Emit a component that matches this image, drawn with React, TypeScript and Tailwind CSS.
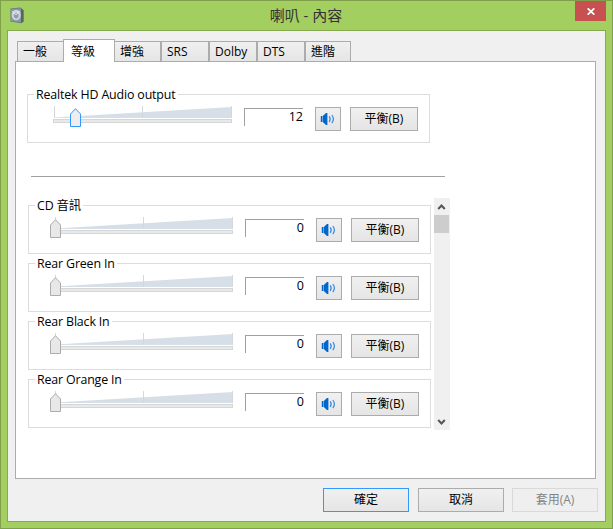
import { useState } from 'react';
import { clsx } from 'clsx';

const TABS = [
  { id: 'general', label: '一般', width: 'w-[47px]' },
  { id: 'levels', label: '等級', width: 'w-[52px]' },
  { id: 'enhance', label: '增強', width: 'w-[47px]' },
  { id: 'srs', label: 'SRS', width: 'w-[48px]' },
  { id: 'dolby', label: 'Dolby', width: 'w-[48px]' },
  { id: 'dts', label: 'DTS', width: 'w-[48px]' },
  { id: 'advanced', label: '進階', width: 'w-[46px]' },
];

const INPUTS = [
  { name: 'CD 音訊', value: 0 },
  { name: 'Rear Green In', value: 0 },
  { name: 'Rear Black In', value: 0 },
  { name: 'Rear Orange In', value: 0 },
];

const BUTTON_FACE = 'border border-[#acacac] bg-linear-to-b from-[#f0f0f0] to-[#e5e5e5]';

function DeviceIcon() {
  return (
    <svg width="15" height="17" viewBox="0 0 15 17">
      <path d="M0.5 1.5 L10.5 0.5 L13.5 3.5 L13.5 14.5 L11 16.2 L0.5 14.5Z" fill="#66737d" />
      <path d="M11 1 L13.5 3.5 L13.5 14.5 L11 16.2Z" fill="#5a665f" />
      <path d="M1 2 L11 1.2 L11 15.6 L1 14Z" fill="#8796a4" />
      <ellipse cx="6.2" cy="8" rx="4.5" ry="5.2" fill="#cdd5dc" />
      <ellipse cx="6.2" cy="8.6" rx="2.4" ry="2.8" fill="#8f9cad" />
      <path d="M2.6 4.4 L6 7.8 L9.4 4" stroke="#eef2f5" fill="none" />
    </svg>
  );
}

function SpeakerIcon() {
  return (
    <svg width="16" height="14" viewBox="0 0 16 14" fill="none">
      <rect x="0.8" y="4" width="1.6" height="6" fill="#0066cc" />
      <path d="M2.8 4 L6 1 H7.4 V13 H6 L2.8 10Z" fill="#0066cc" />
      <path d="M9.2 4.4 Q11.2 7 9.2 9.8" stroke="#2f8ae0" strokeWidth="1.2" />
      <path d="M11.8 3 Q15 7 11.8 11.2" stroke="#2f8ae0" strokeWidth="1.2" />
    </svg>
  );
}

function VolumeSlider({ value, active }: { value: number; active?: boolean }) {
  const x = 2.5 + Math.round(value * 1.75);

  return (
    <svg width="187" height="24" viewBox="0 0 187 24">
      <path d="M7 12.5 L185 2 V13 H7Z" fill="#d6dfe7" />
      <path d="M7.5 1 V13 M95.5 1 V13 M184.5 1 V13" stroke="#d3d8dc" />
      <rect x="6.5" y="14.5" width="178" height="3" fill="#e7eaea" stroke="#d6d6d6" />
      <path
        d={`M${x} 9 L${x + 5} 3.7 L${x + 10} 9 V21.5 H${x}Z`}
        fill={active ? '#eeeeee' : '#e8e8e8'}
        stroke={active ? '#3399ff' : '#acacac'}
      />
    </svg>
  );
}

interface LevelGroupProps {
  name: string;
  value: number;
  active?: boolean;
}

function LevelGroup({ name, value, active }: LevelGroupProps) {
  return (
    <div className="relative flex h-[49px] w-[403px] shrink-0 items-start border border-[#dcdcdc] pl-[19px]">
      <span className="absolute -top-2 left-[6px] bg-white px-[2px] text-[12.4px] leading-4 tracking-[-0.15px]">{name}</span>
      <div className="mt-[10px]">
        <VolumeSlider value={value} active={active} />
      </div>
      <div className="mt-[13px] ml-[10px] h-[18px] w-[59px] border-t border-l border-[#a0a0a0] text-right text-[12.5px] leading-[16px]">
        {value}
      </div>
      <button className={clsx('mt-3 ml-3 flex h-6 w-[26px] items-center justify-center', BUTTON_FACE)}>
        <SpeakerIcon />
      </button>
      <button className={clsx('mt-3 ml-[9px] h-6 w-[68px] leading-[22px]', BUTTON_FACE)}>平衡(B)</button>
    </div>
  );
}

export default function App() {
  const [tab, setTab] = useState('levels');

  return (
    <div className="flex h-[529px] w-[613px] flex-col border border-[#7f9f4b] bg-[#a3ce60] font-['Open_Sans','Noto_Sans_CJK_TC',sans-serif] text-xs text-black">
      {/* Title bar */}
      <div className="flex h-[29px] items-start">
        <div className="w-[40px] pt-[6px] pl-[9px]">
          <DeviceIcon />
        </div>
        <h1 className="flex-1 pr-1 text-center text-[15px] leading-[28px] text-[#333]">喇叭 - 內容</h1>
        <button className="mr-[6px] flex h-5 w-[31px] items-center justify-center bg-[#c75050]">
          <svg width="8" height="7" viewBox="0 0 8 7" stroke="#fff" strokeWidth="1.7">
            <path d="M0.7 0.3 L7.3 6.7 M7.3 0.3 L0.7 6.7" />
          </svg>
        </button>
      </div>

      <div className="mx-[6px] flex h-[492px] flex-col border border-[#88aa4e] bg-[#f0f0f0] px-[7px] pt-2">
        {/* Tabs */}
        <div className="flex h-[22px] items-end pl-[2px]">
          {TABS.map((t) => (
            <button
              key={t.id}
              onClick={() => setTab(t.id)}
              className={clsx(
                'shrink-0 border border-b-0 border-[#acacac] text-left',
                t.width,
                t.id === tab
                  ? 'relative -mr-px -ml-px -mb-px h-[23px] bg-white pl-[7px] leading-[19px]'
                  : 'h-[20px] bg-linear-to-b from-[#f0f0f0] to-[#e5e5e5] pl-[5px] leading-[18px]'
              )}
            >
              {t.label}
            </button>
          ))}
        </div>

        <div className="h-[418px] w-[581px] border border-[#acacac] bg-white pt-8 pl-[11px]">
          <LevelGroup name="Realtek HD Audio output" value={12} active />
          <div className="mt-[33px] ml-1 h-px w-[414px] bg-[#a0a0a0]" />

          <div className="mt-[21px] ml-px flex h-[232px]">
            <div className="flex flex-col gap-[9px] pt-[7px]">
              {INPUTS.map((input) => (
                <LevelGroup key={input.name} {...input} />
              ))}
            </div>
            {/* Scrollbar */}
            <div className="ml-[3px] flex w-4 flex-col bg-[#f0f0f0]">
              <svg width="16" height="17" viewBox="0 0 16 17" fill="none" stroke="#555" strokeWidth="2">
                <path d="M4.2 11 L7.5 7.5 L10.8 11" />
              </svg>
              <div className="h-[18px] w-[15px] bg-[#cdcdcd]" />
              <svg className="mt-auto" width="16" height="17" viewBox="0 0 16 17" fill="none" stroke="#555" strokeWidth="2">
                <path d="M4.2 7 L7.5 10.5 L10.8 7" />
              </svg>
            </div>
          </div>
        </div>

        {/* Dialog buttons */}
        <div className="mt-[9px] flex pl-[308px] leading-[22px]">
          <button className="h-6 w-[86px] border border-[#3399ff] bg-linear-to-b from-[#f0f0f0] to-[#e5e5e5]">確定</button>
          <button className={clsx('ml-[9px] h-6 w-[86px]', BUTTON_FACE)}>取消</button>
          <button disabled className="ml-2 h-6 w-[86px] border border-[#d9d9d9] bg-[#efefef] text-[#838383]">
            套用(A)
          </button>
        </div>
      </div>
    </div>
  );
}
